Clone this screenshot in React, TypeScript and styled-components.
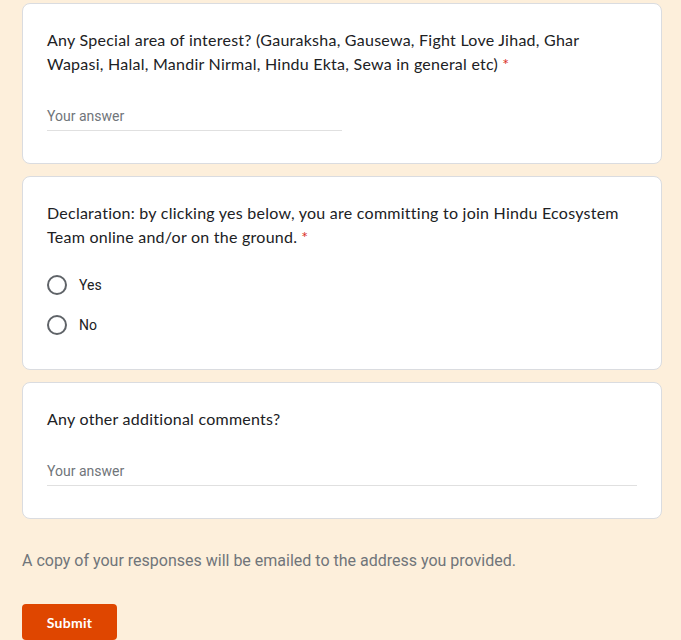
import styled, { createGlobalStyle } from 'styled-components'

const GlobalStyle = createGlobalStyle`
  html, body {
    margin: 0;
    padding: 0;
    background: #fdefdb;
  }
  * {
    box-sizing: border-box;
  }
`

const Page = styled('div')`
  width: 681px;
  height: 640px;
  overflow: hidden;
  padding: 3px 0 0 22px;
  background: #fdefdb;
`

const Column = styled('div')`
  width: 640px;
  display: flex;
  flex-direction: column;
  gap: 12px;
`

const Card = styled('div')`
  background: #fff;
  border: 1px solid #dadce0;
  border-radius: 8px;
  padding: 24px;
`

const Title = styled('div')`
  font-family: Lato, 'Noto Sans', sans-serif;
  font-size: 16px;
  line-height: 24px;
  color: #202124;
  letter-spacing: 0.25px;
`

const Required = styled('span')`
  color: #d93025;
  margin-left: 4px;
`

const Answer = styled('div')<{ $half?: boolean }>`
  width: ${(p) => (p.$half ? '50%' : '100%')};
  margin: 28px 0 8px;
  height: 27px;
  border-bottom: 1px solid #e0e0e0;
  font-family: Roboto, Arial, sans-serif;
  font-size: 14px;
  line-height: 24px;
  color: #70757a;
`

const Options = styled('div')`
  margin-top: 16px;
  display: flex;
  flex-direction: column;
`

const Option = styled('label')`
  height: 40px;
  display: flex;
  align-items: center;
  gap: 12px;
  font-family: Roboto, Arial, sans-serif;
  font-size: 14px;
  color: #202124;
`

const Circle = styled('span')`
  width: 20px;
  height: 20px;
  border: 2px solid #5f6368;
  border-radius: 50%;
  flex-shrink: 0;
`

const Footer = styled('div')`
  padding: 30px 0 31px;
  font-family: Roboto, Arial, sans-serif;
  font-size: 16px;
  line-height: 24px;
  color: #70757a;
`

const SubmitButton = styled('button')`
  width: 95px;
  height: 36px;
  border: none;
  border-radius: 4px;
  background: #df4600;
  color: #fff;
  font-family: Lato, 'Noto Sans', sans-serif;
  font-weight: 700;
  font-size: 14px;
  letter-spacing: 0.25px;
`

const choices = ['Yes', 'No']

export default function App() {
  return (
    <Page>
      <GlobalStyle />
      <Column>
        <Card>
          <Title>
            Any Special area of interest? (Gauraksha, Gausewa, Fight Love Jihad, Ghar Wapasi, Halal, Mandir
            Nirmal, Hindu Ekta, Sewa in general etc)
            <Required>*</Required>
          </Title>
          <Answer $half>Your answer</Answer>
        </Card>
        <Card>
          <Title>
            Declaration: by clicking yes below, you are committing to join Hindu Ecosystem Team online and/or on
            the ground.
            <Required>*</Required>
          </Title>
          <Options>
            {choices.map((c) => (
              <Option key={c}>
                <Circle />
                {c}
              </Option>
            ))}
          </Options>
        </Card>
        <Card>
          <Title>Any other additional comments?</Title>
          <Answer>Your answer</Answer>
        </Card>
      </Column>
      <Footer>A copy of your responses will be emailed to the address you provided.</Footer>
      <SubmitButton>Submit</SubmitButton>
    </Page>
  )
}
